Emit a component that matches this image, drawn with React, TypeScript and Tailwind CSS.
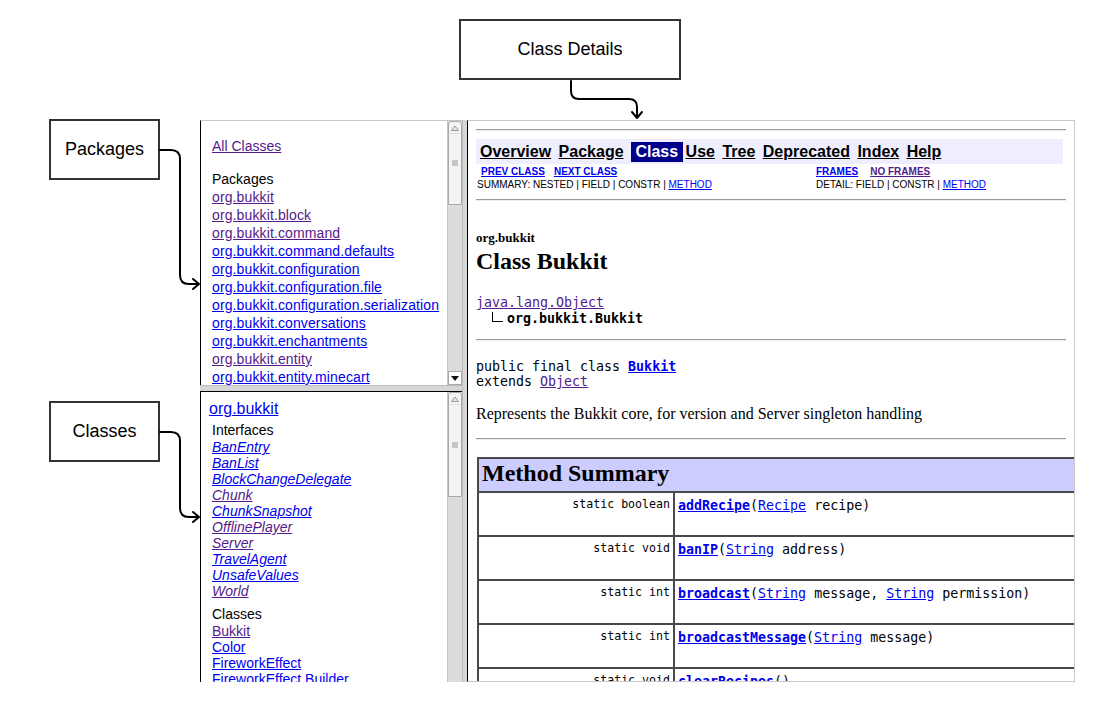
import React from "react";

const SANS = "font-['Liberation_Sans',Arial,sans-serif]";
const SERIF = "font-['Liberation_Serif','Times_New_Roman',serif]";
const MONO = "font-['DejaVu_Sans_Mono',monospace]";

function Hr({ className = "" }: { className?: string }) {
  return <div className={"h-[2px] border-t border-b border-t-[#9a9a9a] border-b-[#ececec] " + className} />;
}

function Scrollbar({ thumbClass, showDown }: { thumbClass: string; showDown: boolean }) {
  return (
    <div className="w-[15px] h-full flex flex-col bg-[#dcdcdc] border-l border-[#c4c4c4] shrink-0">
      <div className={"relative bg-[#f3f3f3] border border-[#a9a9a9] rounded-t-[3px] shrink-0 " + thumbClass}>
        <div className="h-[12px] flex items-center justify-center border-b border-[#e0e0e0]">
          <svg width="8" height="6" viewBox="0 0 8 6">
            <path d="M0.5 5.5 L4 1 L7.5 5.5 Z" fill="#e8e8e8" stroke="#9a9a9a" strokeWidth="1" />
          </svg>
        </div>
        <div className="absolute left-0 right-0 top-1/2 -translate-y-1/2 flex flex-col items-center gap-[1px]">
          <div className="w-[6px] h-[1px] bg-[#9c9c9c]" />
          <div className="w-[6px] h-[1px] bg-[#9c9c9c]" />
          <div className="w-[6px] h-[1px] bg-[#9c9c9c]" />
        </div>
      </div>
      <div className="flex-1" />
      {showDown && (
        <div className="h-[14px] shrink-0 bg-white border border-[#a9a9a9] flex items-center justify-center">
          <svg width="8" height="5" viewBox="0 0 8 5">
            <path d="M0 0 L8 0 L4 5 Z" fill="#111" />
          </svg>
        </div>
      )}
    </div>
  );
}

function L({ children, v = false, className = "" }: { children: React.ReactNode; v?: boolean; className?: string }) {
  return (
    <a className={(v ? "text-[#551a8b] " : "text-[#0000ee] ") + "underline " + className}>{children}</a>
  );
}

const pkgs: [string, boolean][] = [
  ["org.bukkit", true],
  ["org.bukkit.block", true],
  ["org.bukkit.command", true],
  ["org.bukkit.command.defaults", false],
  ["org.bukkit.configuration", false],
  ["org.bukkit.configuration.file", false],
  ["org.bukkit.configuration.serialization", false],
  ["org.bukkit.conversations", false],
  ["org.bukkit.enchantments", false],
  ["org.bukkit.entity", true],
  ["org.bukkit.entity.minecart", false],
  ["org.bukkit.event", false],
  ["org.bukkit.event.block", false],
];

const ifaces: [string, boolean][] = [
  ["BanEntry", false],
  ["BanList", false],
  ["BlockChangeDelegate", false],
  ["Chunk", true],
  ["ChunkSnapshot", false],
  ["OfflinePlayer", true],
  ["Server", true],
  ["TravelAgent", false],
  ["UnsafeValues", false],
  ["World", true],
];

const classes: [string, boolean][] = [
  ["Bukkit", true],
  ["Color", false],
  ["FireworkEffect", false],
  ["FireworkEffect.Builder", false],
  ["GameMode", false],
];

type Row = { mod: string; name: string; params: React.ReactNode };
const rows: Row[] = [
  { mod: "static boolean", name: "addRecipe", params: <><L>Recipe</L> recipe)</> },
  { mod: "static void", name: "banIP", params: <><L>String</L> address)</> },
  {
    mod: "static int",
    name: "broadcast",
    params: <><L>String</L> message, <L>String</L> permission)</>,
  },
  { mod: "static int", name: "broadcastMessage", params: <><L>String</L> message)</> },
  { mod: "static void", name: "clearRecipes", params: <>)</> },
];

export default function App() {
  return (
    <div className={"relative w-[1095px] h-[703px] bg-white overflow-hidden text-black " + SANS}>
      {/* browser frames */}
      <div className="pt-[120px] pl-[200px] flex">
        {/* left column */}
        <div className="w-[262px] h-[562px] flex flex-col">
          {/* packages frame */}
          <div className="h-[265px] flex border-t border-l border-t-[#c8c8c8] border-l-black shrink-0">
            <div className="flex-1 overflow-hidden pl-[11px] pt-[16px] text-[14px] tracking-[0.12px]">
              <div className="leading-[18px] tracking-normal">
                <L v>All Classes</L>
              </div>
              <div className="leading-[18px] mt-[15px] tracking-normal">Packages</div>
              {pkgs.map(([p, v]) => (
                <div key={p} className="leading-[18px] whitespace-nowrap">
                  <L v={v}>{p}</L>
                </div>
              ))}
            </div>
            <Scrollbar thumbClass="h-[84px]" showDown={true} />
          </div>
          <div className="h-[6px] bg-[#d6d6d6] border-t border-[#bdbdbd] shrink-0" />
          {/* classes frame */}
          <div className="flex-1 flex border-t border-l border-black min-h-0">
            <div className="flex-1 overflow-hidden pl-[8px] pt-[8px] text-[14px]">
              <div className="leading-[18px] text-[16px]">
                <L>org.bukkit</L>
              </div>
              <div className="pl-[3px]">
                <div className="leading-[18px] mt-[3px]">Interfaces</div>
                {ifaces.map(([n, v]) => (
                  <div key={n} className="leading-[16px] italic whitespace-nowrap">
                    <L v={v}>{n}</L>
                  </div>
                ))}
                <div className="leading-[18px] mt-[6px]">Classes</div>
                {classes.map(([n, v]) => (
                  <div key={n} className="leading-[16px] whitespace-nowrap">
                    <L v={v}>{n}</L>
                  </div>
                ))}
              </div>
            </div>
            <Scrollbar thumbClass="h-[105px]" showDown={false} />
          </div>
        </div>
        {/* vertical divider */}
        <div className="w-[5px] h-[562px] bg-[#d6d6d6] border-l border-[#bdbdbd]" />
        {/* class details frame */}
        <div className="w-[608px] h-[562px] border-l border-t border-r border-b border-l-black border-t-[#c8c8c8] border-r-[#c8c8c8] border-b-[#c8c8c8] overflow-hidden px-[8px]">
          <Hr className="mt-[8px]" />
          <div className="mt-[8px] w-[587px] h-[25px] bg-[#eeeeff] flex items-center pl-[4px] gap-[3px] text-[16px] font-bold">
            <span><a className="underline">Overview</a>{"\u00a0"}</span>
            <span><a className="underline">Package</a>{"\u00a0"}</span>
            <span className="bg-[#00008b] text-white h-[20px] leading-[20px] inline-block">{"\u00a0"}Class{"\u00a0"}</span>
            <span><a className="underline">Use</a>{"\u00a0"}</span>
            <span><a className="underline">Tree</a>{"\u00a0"}</span>
            <span><a className="underline">Deprecated</a>{"\u00a0"}</span>
            <span><a className="underline">Index</a>{"\u00a0"}</span>
            <span><a className="underline">Help</a>{"\u00a0"}</span>
          </div>
          <div className="mt-[1px] grid grid-cols-[340px_1fr] text-[10px]">
            <div className="pl-[1px]">
              <div className="h-[13px] leading-[13px] font-bold pl-[4px] whitespace-nowrap">
                <L>PREV CLASS</L>
                <L className="ml-[9px]">NEXT CLASS</L>
              </div>
              <div className="h-[13px] leading-[13px] whitespace-nowrap">
                SUMMARY: NESTED | FIELD | CONSTR | <L>METHOD</L>
              </div>
            </div>
            <div>
              <div className="h-[13px] leading-[13px] font-bold whitespace-nowrap">
                <L>FRAMES</L>
                <L v className="ml-[12px]">NO FRAMES</L>
              </div>
              <div className="h-[13px] leading-[13px] whitespace-nowrap">
                DETAIL: FIELD | CONSTR | <L>METHOD</L>
              </div>
            </div>
          </div>
          <Hr className="mt-[8px]" />
          <div className={"mt-[29px] text-[13px] font-bold leading-[16px] " + SERIF}>org.bukkit</div>
          <div className={"mt-[1px] text-[24px] font-bold leading-[28px] " + SERIF}>Class Bukkit</div>
          <div className={"mt-[20px] text-[13.3px] leading-[15px] " + MONO}>
            <L v>java.lang.Object</L>
          </div>
          <div className={"h-[17px] flex items-center text-[13.3px] " + MONO}>
            <span className="ml-[16px] w-[11px] h-[10px] border-l border-b border-black mb-[4px]" />
            <span className="ml-[4px] font-bold">org.bukkit.Bukkit</span>
          </div>
          <Hr className="mt-[12px]" />
          <div className={"mt-[18px] text-[13.3px] leading-[15px] whitespace-pre " + MONO}>
            <div>public final class <L className="font-bold">Bukkit</L></div>
            <div>extends <L v>Object</L></div>
          </div>
          <div className={"mt-[16px] text-[16px] leading-[18px] whitespace-nowrap " + SERIF}>
            Represents the Bukkit core, for version and Server singleton handling
          </div>
          <Hr className="mt-[15px]" />
          {/* method summary table */}
          <div className="mt-[17px] ml-[1px] w-[640px] border-l-2 border-t-2 border-[#4a4a4a]">
            <div className={"h-[34px] bg-[#ccccff] border-b-2 border-[#4a4a4a] pl-[3px] pb-[5px] flex items-center text-[24px] font-bold " + SERIF}>
              Method Summary
            </div>
            {rows.map((r, i) => (
              <div key={i} className="h-[44px] flex border-b-2 border-[#4a4a4a]">
                <div className={"w-[196px] shrink-0 border-r-2 border-[#4a4a4a] text-right pr-[3px] pt-[4px] text-[11.6px] leading-[15px] whitespace-pre " + MONO}>
                  {r.mod}
                </div>
                <div className={"pl-[3px] pt-[5px] text-[13.3px] leading-[15px] whitespace-pre " + MONO}>
                  <L className="font-bold">{r.name}</L>({r.params}
                </div>
              </div>
            ))}
          </div>
        </div>
      </div>

      {/* annotation boxes */}
      <div className="absolute left-[459px] top-[19px] w-[222px] h-[61px] border-2 border-[#333] bg-white flex items-center justify-center text-[18px]">
        Class Details
      </div>
      <div className="absolute left-[49px] top-[119px] w-[111px] h-[61px] border-2 border-[#333] bg-white flex items-center justify-center text-[18px]">
        Packages
      </div>
      <div className="absolute left-[49px] top-[401px] w-[111px] h-[61px] border-2 border-[#333] bg-white flex items-center justify-center text-[18px]">
        Classes
      </div>

      {/* connectors */}
      <svg className="absolute left-0 top-0 pointer-events-none" width="1095" height="703" viewBox="0 0 1095 703">
        <g fill="none" stroke="#000" strokeWidth="2" strokeLinecap="round" strokeLinejoin="round">
          <path d="M160 150 H171 Q180 150 180 159 V275 Q180 284 189 284 H198" />
          <path d="M193 279 L199 284 L193 289" />
          <path d="M160 432 H171 Q180 432 180 441 V508 Q180 517 189 517 H198" />
          <path d="M193 512 L199 517 L193 522" />
          <path d="M571 81 V91 Q571 99 579 99 H629 Q637 99 637 107 V117" />
          <path d="M632 112 L637 118 L642 112" />
        </g>
      </svg>
    </div>
  );
}
